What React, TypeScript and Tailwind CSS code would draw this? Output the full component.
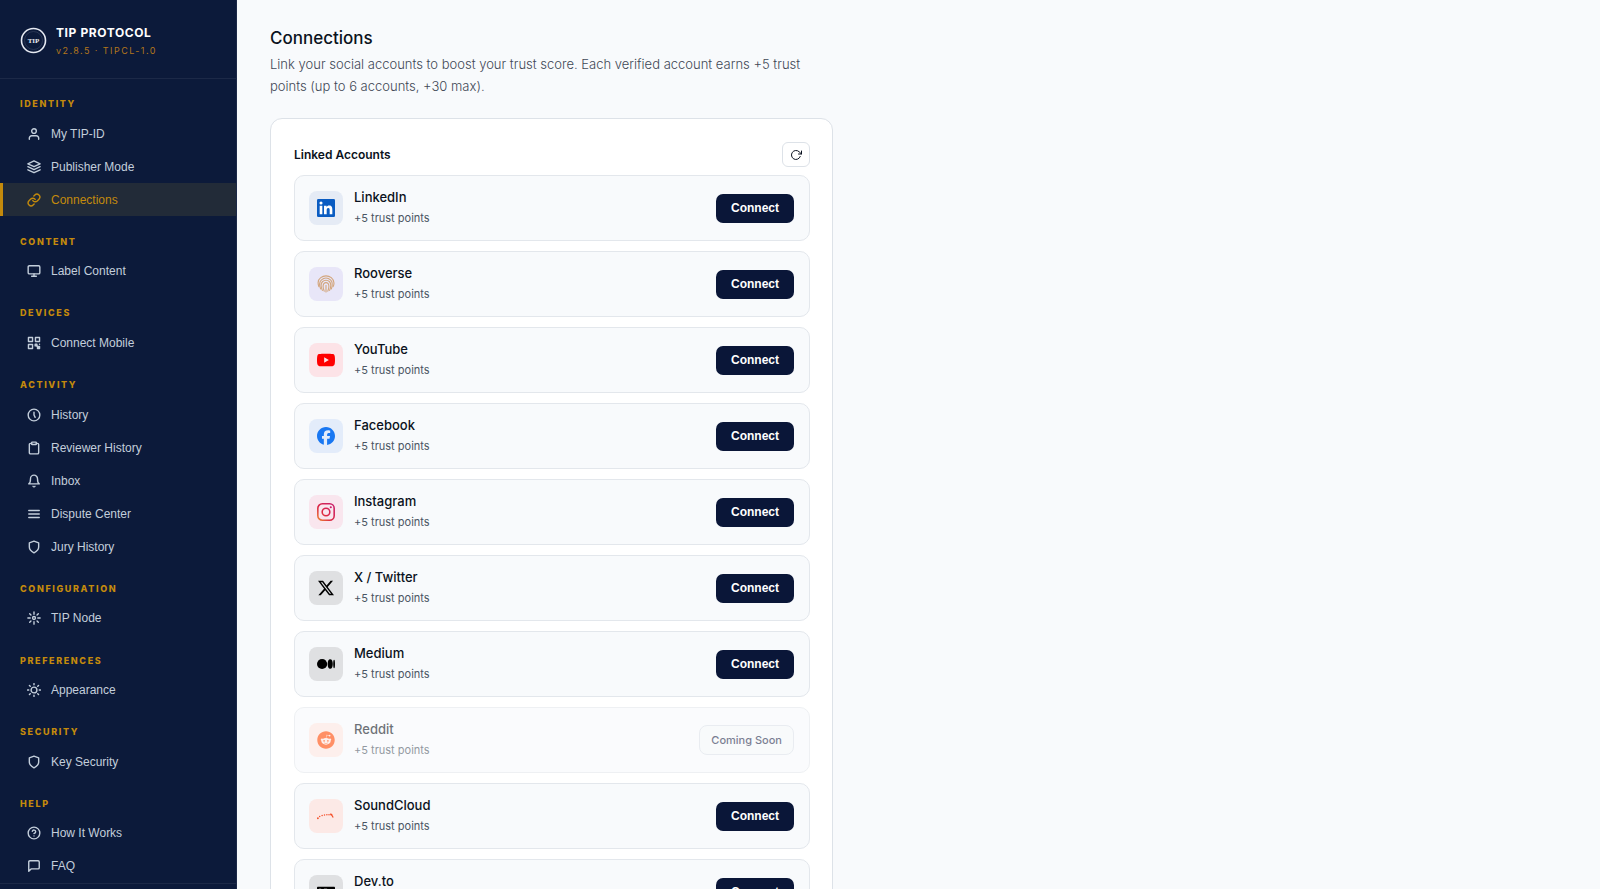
import type { ReactNode } from "react";
import { FaReddit } from "react-icons/fa";
import { FiBell, FiClipboard, FiHelpCircle, FiLink, FiMenu, FiMessageSquare, FiMonitor, FiRotateCw, FiShield, FiUser } from "react-icons/fi";
import { SiFacebook, SiX, SiYoutube } from "react-icons/si";

type NavItem = { label: string; icon: ReactNode; active?: boolean };
type NavSection = { title: string; items: NavItem[] };
type Account = { name: string; icon: ReactNode; tile: string; soon?: boolean };

function StrokeIcon({ children }: { children: ReactNode }) {
  return (
    <svg
      viewBox="0 0 24 24"
      className="size-3.5"
      fill="none"
      stroke="currentColor"
      strokeWidth="2"
      strokeLinecap="round"
      strokeLinejoin="round"
      aria-hidden="true"
    >
      {children}
    </svg>
  );
}

const layersIcon = (
  <StrokeIcon>
    <path d="M12 1.500 1.500 6.500l10.500 5 10.500-5zM1.500 11.500l10.500 5 10.500-5M1.500 16.800l10.500 5 10.500-5" />
  </StrokeIcon>
);

const qrIcon = (
  <StrokeIcon>
    <path d="M2.500 2.500h7v7h-7zM14.500 2.500h7v7h-7zM2.500 14.500h7v7h-7z" />
    <path d="M14 14h3v3h-3zM18 18h3.500v3.500H18z" fill="currentColor" />
    <path d="M21.500 14v.1M17 17l1 1" />
  </StrokeIcon>
);

const clockIcon = (
  <StrokeIcon>
    <circle cx="12" cy="12" r="10" />
    <path d="M12 7v5l2 4" />
  </StrokeIcon>
);

const nodeIcon = (
  <StrokeIcon>
    <circle cx="12" cy="12" r="2.500" />
    <path d="M12 1.500v4M12 18.500v4M1.500 12h4M18.500 12h4M4.600 4.600l2.200 2.200M17.200 17.200l2.200 2.200M4.600 19.400l2.200-2.200M17.200 6.800l2.200-2.200" />
  </StrokeIcon>
);

const sunIcon = (
  <StrokeIcon>
    <circle cx="12" cy="12" r="5" />
    <path d="M12 1v2M12 21v2M1 12h2M21 12h2M4.200 4.200l1.400 1.400M18.400 18.400l1.400 1.400M4.200 19.800l1.400-1.400M18.400 5.600l1.400-1.400" />
  </StrokeIcon>
);

const sections: NavSection[] = [
  {
    title: "IDENTITY",
    items: [
      { label: "My TIP-ID", icon: <FiUser /> },
      { label: "Publisher Mode", icon: layersIcon },
      { label: "Connections", icon: <FiLink />, active: true },
    ],
  },
  { title: "CONTENT", items: [{ label: "Label Content", icon: <FiMonitor /> }] },
  { title: "DEVICES", items: [{ label: "Connect Mobile", icon: qrIcon }] },
  {
    title: "ACTIVITY",
    items: [
      { label: "History", icon: clockIcon },
      { label: "Reviewer History", icon: <FiClipboard /> },
      { label: "Inbox", icon: <FiBell /> },
      { label: "Dispute Center", icon: <FiMenu /> },
      { label: "Jury History", icon: <FiShield /> },
    ],
  },
  { title: "CONFIGURATION", items: [{ label: "TIP Node", icon: nodeIcon }] },
  { title: "PREFERENCES", items: [{ label: "Appearance", icon: sunIcon }] },
  { title: "SECURITY", items: [{ label: "Key Security", icon: <FiShield /> }] },
  {
    title: "HELP",
    items: [
      { label: "How It Works", icon: <FiHelpCircle /> },
      { label: "FAQ", icon: <FiMessageSquare /> },
    ],
  },
];

function LinkedInIcon() {
  return (
    <svg viewBox="0 0 24 24" aria-hidden="true">
      <rect width="24" height="24" rx="1.8" fill="#0a5cc2" />
      <path
        fill="#fff"
        d="M3.56 9h3.56v11.45H3.56zM5.34 3.3a2.06 2.06 0 1 1 0 4.13 2.06 2.06 0 0 1 0-4.13zM9.35 9h3.41v1.56h.05c.48-.9 1.64-1.85 3.37-1.85 3.6 0 4.27 2.37 4.27 5.46v6.28h-3.56v-5.57c0-1.33-.03-3.04-1.85-3.04-1.85 0-2.14 1.45-2.14 2.94v5.67H9.35z"
      />
    </svg>
  );
}

function FingerprintIcon() {
  return (
    <svg viewBox="0 0 24 24" fill="none" stroke="#d3a67e" strokeWidth="1.5" strokeLinecap="round" aria-hidden="true">
      <path d="M2.500 15.500C.5 10 1.500 6 5 3.500c4-3.200 10-3.200 14 0 3.500 3 4.500 7.500 2.500 12" />
      <path d="M4.800 18.500C3 14 2.800 9.500 6 6.500c3.500-3.200 8.500-3.200 12 0 2.800 2.600 2.800 7.500 1.200 12" />
      <path d="M7.200 20.500c-1.800-4-2.400-9 0-11.500 2.600-2.600 7-2.600 9.600 0 2 2.200 1.600 7.500 0 11.500" />
      <path d="M9.600 21.500c-1.500-4-2-8-.5-10 1.600-1.800 4.200-1.800 5.800 0 1.400 2 1 6-.5 10" />
      <path d="M12 14v8.500" />
    </svg>
  );
}

function InstagramIcon() {
  return (
    <svg viewBox="0 0 24 24" fill="none" stroke="url(#instagram-fill)" strokeWidth="2.1" aria-hidden="true">
      <defs>
        <linearGradient id="instagram-fill" x1="0" y1="24" x2="24" y2="0" gradientUnits="userSpaceOnUse">
          <stop offset="0" stopColor="#f09433" />
          <stop offset="0.4" stopColor="#dc2743" />
          <stop offset="1" stopColor="#c81f70" />
        </linearGradient>
      </defs>
      <rect x="1.1" y="1.1" width="21.8" height="21.8" rx="6" />
      <circle cx="12" cy="12" r="5.1" />
      <circle cx="18.4" cy="5.6" r="1.4" fill="#c91f6a" stroke="none" />
    </svg>
  );
}

function MediumIcon() {
  return (
    <svg viewBox="0 0 24 24" fill="#000" aria-hidden="true">
      <circle cx="6.8" cy="12" r="6.800" />
      <ellipse cx="17.600" cy="12" rx="3.400" ry="6.400" />
      <ellipse cx="22.800" cy="12" rx="1.200" ry="5.700" />
    </svg>
  );
}

function SoundCloudIcon() {
  return (
    <svg viewBox="0 0 24 24" fill="#f5502a" aria-hidden="true">
      <circle cx="1.2" cy="15" r="1.2" />
      <circle cx="3.6" cy="12.6" r="1" />
      <circle cx="6.8" cy="11.2" r="1" />
      <circle cx="10" cy="10.6" r="1" />
      <circle cx="13.200" cy="10.400" r="1" />
      <circle cx="16" cy="10.400" r="1" />
      <path d="M17.500 8.800c2.200-.4 3.200.8 3.400 2.400l1.400 2.600-1.400.4-1.600-2.600-1.800-1z" />
    </svg>
  );
}

function DevIcon() {
  return (
    <svg viewBox="0 0 24 24" fill="none" stroke="#fff" strokeWidth="1.5" aria-hidden="true">
      <rect y="5" width="24" height="14" rx="1" fill="#000" stroke="none" />
      <path d="M3.500 8.500v7h1.300q2 0 2-2v-3q0-2-2-2zM13.500 8.500H10v7h3.500M10 12h2.500M16 8.500l2.200 7 2.200-7" />
    </svg>
  );
}

const accounts: Account[] = [
  { name: "LinkedIn", icon: <LinkedInIcon />, tile: "bg-[#e5ebf5]" },
  { name: "Rooverse", icon: <FingerprintIcon />, tile: "bg-[#e8e6f8]" },
  { name: "YouTube", icon: <SiYoutube color="#ff0000" />, tile: "bg-[#fce3e7]" },
  { name: "Facebook", icon: <SiFacebook color="#1877f2" />, tile: "bg-[#e3ecfa]" },
  { name: "Instagram", icon: <InstagramIcon />, tile: "bg-[#f9e6ee]" },
  { name: "X / Twitter", icon: <SiX color="#000000" className="p-px" />, tile: "bg-[#dfe0e2]" },
  { name: "Medium", icon: <MediumIcon />, tile: "bg-[#dfe0e2]" },
  { name: "Reddit", icon: <FaReddit color="#ff4500" />, tile: "bg-[#fde6e0]", soon: true },
  { name: "SoundCloud", icon: <SoundCloudIcon />, tile: "bg-[#fce9e6]" },
  { name: "Dev.to", icon: <DevIcon />, tile: "bg-[#dfe0e2]" },
];

function SidebarLink({ item }: { item: NavItem }) {
  return (
    <a
      href="#"
      aria-current={item.active ? "page" : undefined}
      className={
        item.active
          ? "flex h-[33px] items-center gap-2.5 border-l-3 border-[#c48a0c] bg-[#222b38] pl-6 text-[#c48a0c]"
          : "flex h-[33px] items-center gap-2.5 border-l-3 border-transparent pl-6 text-[#c3cedb]"
      }
    >
      <span className="flex size-3.5 shrink-0 text-sm [&>svg]:stroke-[2.4]">{item.icon}</span>
      <span className="font-['Liberation_Sans',sans-serif] text-xs">{item.label}</span>
    </a>
  );
}

function Sidebar() {
  return (
    <aside className="flex h-screen w-[237px] shrink-0 flex-col border-r border-[#1c2948] bg-[#0c1a3a]">
      <div className="flex h-[79px] shrink-0 items-center gap-2 border-b border-[#1c2947] pt-1 pl-5">
        <svg viewBox="0 0 28 28" className="size-7" aria-hidden="true">
          <circle cx="13.500" cy="13.500" r="12" fill="none" stroke="#e6eaf2" strokeWidth="1.600" />
          <circle cx="13.500" cy="13.500" r="9" fill="none" stroke="#33405f" strokeWidth="0.700" />
          <text x="13.500" y="16" textAnchor="middle" fill="#e6eaf2" className="font-['Liberation_Serif',serif] text-[7px] font-bold">
            TIP
          </text>
        </svg>
        <div className="pt-0.5">
          <p className="text-xs leading-[18px] font-bold tracking-wider text-white">TIP PROTOCOL</p>
          <p className="text-[9px] leading-[18px] tracking-[0.16em] text-[#b3761b]">v2.8.5 · TIPCL-1.0</p>
        </div>
      </div>
      <nav aria-label="Main" className="flex flex-1 flex-col justify-between pt-[18px]">
        {sections.map((section) => (
          <div key={section.title}>
            <h2 className="pb-1.5 pl-5 text-[9px] leading-[14px] font-extrabold tracking-[0.18em] text-[#c48a0c]">{section.title}</h2>
            {section.items.map((item) => (
              <SidebarLink key={item.label} item={item} />
            ))}
          </div>
        ))}
      </nav>
      <div className="h-1.5 shrink-0 border-t border-[#1c2947]" />
    </aside>
  );
}

function AccountRow({ account }: { account: Account }) {
  return (
    <li
      className={
        account.soon
          ? "flex h-[66px] items-center gap-[11px] rounded-[10px] border border-[#e3e7ec] bg-[#f8fafc] pr-[15px] pl-3.5 opacity-60"
          : "flex h-[66px] items-center gap-[11px] rounded-[10px] border border-[#e3e7ec] bg-[#f8fafc] pr-[15px] pl-3.5"
      }
    >
      <span className={`flex size-[34px] shrink-0 items-center justify-center rounded-lg ${account.tile}`}>
        <span className="flex size-[18px] text-lg [&>svg]:size-full">{account.icon}</span>
      </span>
      <div className="flex-1">
        <h3 className="text-[13px] leading-5 font-medium text-[#0b1220]">{account.name}</h3>
        <p className="text-[11px] leading-[22px] text-[#4b5563]">+5 trust points</p>
      </div>
      {account.soon ? (
        <button type="button" disabled className="h-[30px] rounded-lg border border-[#dbe1e9] bg-[#f4f7fa] px-[11px] text-[11px] font-medium text-[#1e2a4a]">
          Coming Soon
        </button>
      ) : (
        <button type="button" className="h-[29px] rounded-[7px] bg-[#0a1638] px-[15px] font-['Liberation_Sans',sans-serif] text-xs font-bold text-white">
          Connect
        </button>
      )}
    </li>
  );
}

export default function App() {
  return (
    <div className="flex h-screen overflow-hidden bg-[#f8fafc] font-['Inter',sans-serif]">
      <Sidebar />
      <main className="min-w-0 flex-1 overflow-hidden px-[33px] pt-[25px]">
        <div className="max-w-[563px]">
          <h1 className="text-[17px] leading-[26px] font-medium text-[#0b1220]">Connections</h1>
          <p className="mt-0.5 max-w-[540px] text-[13px] leading-[22px] font-light text-[#3f4856]">
            Link your social accounts to boost your trust score. Each verified account earns +5 trust points (up to 6 accounts, +30 max).
          </p>
          <section aria-labelledby="linked-heading" className="mt-[21px] rounded-xl border border-[#dde2e8] bg-white pt-[23px] pr-[22px] pb-6 pl-[23px]">
            <div className="mb-2 flex items-center justify-between">
              <h2 id="linked-heading" className="text-xs font-semibold text-[#0b1220]">Linked Accounts</h2>
              <button type="button" aria-label="Refresh" className="flex h-[25px] w-7 items-center justify-center rounded-md border border-[#dde2e8] text-[#0b1220]">
                <FiRotateCw className="size-3" />
              </button>
            </div>
            <ul className="flex flex-col gap-2.5">
              {accounts.map((account) => (
                <AccountRow key={account.name} account={account} />
              ))}
            </ul>
          </section>
        </div>
      </main>
    </div>
  );
}
